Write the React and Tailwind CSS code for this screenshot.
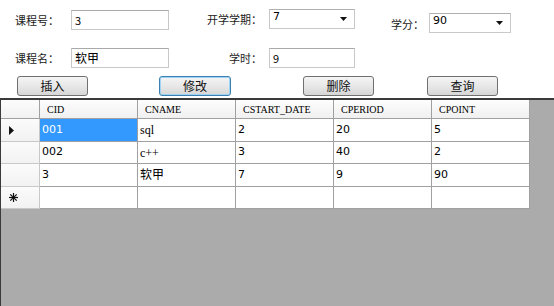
import React from 'react';

const cjk = { fontFamily: '"Noto Sans CJK SC", "DejaVu Sans", sans-serif' };
const serif = '"Liberation Serif", "DejaVu Serif", serif';

const columns = ['CID', 'CNAME', 'CSTART_DATE', 'CPERIOD', 'CPOINT'];
const rows = [
  { h: 'h-[23px]', cells: ['001', 'sql', '2', '20', '5'], current: true },
  { h: 'h-[22px]', cells: ['002', 'c++', '3', '40', '2'] },
  { h: 'h-[23px]', cells: ['3', '软甲', '7', '9', '90'] },
];

function Label({ children, className = '' }) {
  return (
    <span className={`text-[11px] text-[#1a1a1a] leading-none ${className}`} style={cjk}>
      {children}
    </span>
  );
}

function TextBox({ value, className = '' }) {
  return (
    <div
      className={`h-[20px] border border-[#c9c9c9] border-t-[#a9a9a9] bg-white flex items-center pl-[3px] text-[11px] text-black ${className}`}
      style={cjk}
    >
      {value}
    </div>
  );
}

function Combo({ value, className = '' }) {
  return (
    <div
      className={`h-[20px] border border-[#c9c9c9] border-t-[#b0b0b0] bg-white flex items-center justify-between pl-[3px] pr-[7px] text-[11px] text-black ${className}`}
      style={{ fontFamily: '"DejaVu Sans", sans-serif' }}
    >
      <span className="-mt-[4px]">{value}</span>
      <svg width="7" height="4" viewBox="0 0 7 4">
        <polygon points="0,0 7,0 3.5,4" fill="#111" />
      </svg>
    </div>
  );
}

function Button({ children, focus, className = '' }) {
  return (
    <div
      className={`h-[20px] w-[71px] rounded-[3px] border flex items-center justify-center text-[12px] text-[#111] bg-gradient-to-b from-[#f4f4f4] via-[#e8e8e8] to-[#d6d6d6] ${
        focus ? 'border-[#3c7fb1] shadow-[inset_0_0_0_1px_#9fd3f3]' : 'border-[#707070]'
      } ${className}`}
      style={cjk}
    >
      {children}
    </div>
  );
}

function Asterisk() {
  return (
    <svg width="9" height="9" viewBox="0 0 9 9">
      <g stroke="#111" strokeWidth="1.2">
        <line x1="4.5" y1="0" x2="4.5" y2="9" />
        <line x1="0" y1="4.5" x2="9" y2="4.5" />
        <line x1="1.3" y1="1.3" x2="7.7" y2="7.7" />
        <line x1="7.7" y1="1.3" x2="1.3" y2="7.7" />
      </g>
    </svg>
  );
}

export default function App() {
  return (
    <div className="w-[554px] h-[306px] bg-white flex flex-col overflow-hidden">
      {/* form */}
      <div className="h-[98px] flex flex-col">
        <div className="flex items-start pt-[10px]">
          <div className="w-[71px] pl-[15px] h-[20px] flex items-center">
            <Label>课程号：</Label>
          </div>
          <TextBox value="3" className="w-[98px]" />
          <div className="w-[100px] h-[20px] flex items-center justify-end pr-[7px] -mt-[1px]">
            <Label>开学学期：</Label>
          </div>
          <Combo value="7" className="w-[86px] -mt-[1px]" />
          <div className="w-[74px] h-[20px] mt-[4px] flex items-center justify-end pr-[5px]">
            <Label>学分：</Label>
          </div>
          <Combo value="90" className="w-[82px] mt-[3px]" />
        </div>
        <div className="flex items-start mt-[14px]">
          <div className="w-[71px] pl-[15px] h-[20px] flex items-center">
            <Label>课程名：</Label>
          </div>
          <TextBox value="软甲" className="w-[98px] text-[12px]" />
          <div className="w-[100px] h-[20px] flex items-center justify-end pr-[7px]">
            <Label>学时：</Label>
          </div>
          <TextBox value="9" className="w-[86px]" />
        </div>
        <div className="flex items-start mt-[8px] pl-[17px]">
          <Button>插入</Button>
          <Button focus className="ml-[71px] w-[72px]">修改</Button>
          <Button className="ml-[72px]">删除</Button>
          <Button className="ml-[53px]">查询</Button>
        </div>
      </div>

      {/* grid */}
      <div className="flex-1 bg-[#ababab] border-t-2 border-l border-[#3a3a3a] flex flex-col">
        <div className="flex h-[19px] w-[529px]">
          <div className="w-[39px] border-r border-b border-[#a0a0a0] bg-gradient-to-b from-[#fcfcfc] to-[#f1f1f1]" />
          {columns.map((c) => (
            <div
              key={c}
              className="w-[98px] border-r border-b border-[#a0a0a0] bg-gradient-to-b from-[#fdfdfd] to-[#f0f0f0] flex items-center pl-[7px] text-[10px] text-black"
              style={{ fontFamily: serif }}
            >
              {c}
            </div>
          ))}
        </div>
        {rows.map((r, i) => (
          <div key={i} className={`flex ${r.h} w-[529px]`}>
            <div className="w-[39px] border-r border-b border-[#c8c8c8] bg-gradient-to-b from-[#fbfbfb] to-[#f2f2f2] flex items-center pl-[8px]">
              {r.current && (
                <svg width="5" height="9" viewBox="0 0 5 9">
                  <polygon points="0,0 5,4.5 0,9" fill="#111" />
                </svg>
              )}
            </div>
            {r.cells.map((v, j) => (
              <div
                key={j}
                className={`w-[98px] border-r border-b border-[#a0a0a0] flex items-center pl-[2px] text-[11px] ${
                  r.current && j === 0 ? 'bg-[#3399ff] text-white' : 'bg-white text-black'
                }`}
                style={
                  j === 1 && i < 2
                    ? { fontFamily: serif, fontSize: '12px' }
                    : { fontFamily: '"DejaVu Sans", "Noto Sans CJK SC", sans-serif', fontSize: j === 1 ? '12px' : '11px' }
                }
              >
                {v}
              </div>
            ))}
          </div>
        ))}
        <div className="flex h-[22px] w-[529px]">
          <div className="w-[39px] border-r border-b border-[#c8c8c8] bg-gradient-to-b from-[#fbfbfb] to-[#f2f2f2] flex items-center pl-[8px]">
            <Asterisk />
          </div>
          {columns.map((c) => (
            <div key={c} className="w-[98px] border-r border-b border-[#a0a0a0] bg-white" />
          ))}
        </div>
      </div>
    </div>
  );
}
